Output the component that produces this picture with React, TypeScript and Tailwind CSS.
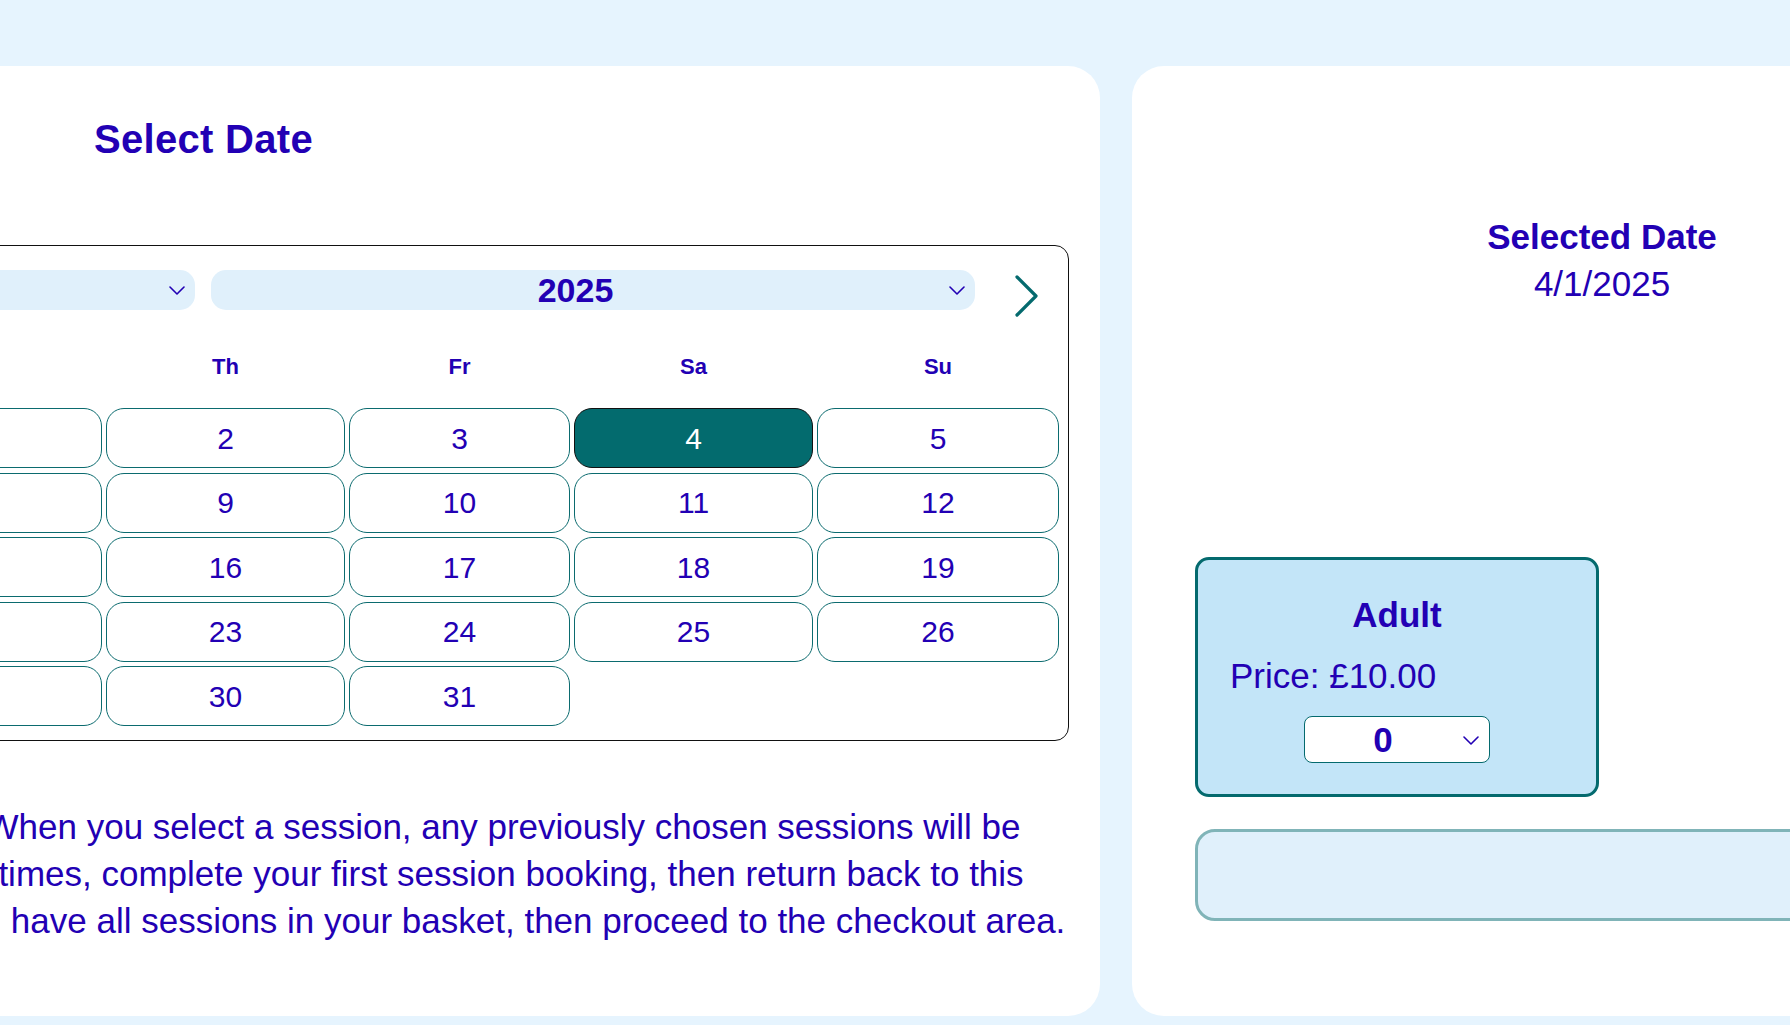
const days: (number | null)[] = [
  null, null, 1, 2, 3, 4, 5,
  6, 7, 8, 9, 10, 11, 12,
  13, 14, 15, 16, 17, 18, 19,
  20, 21, 22, 23, 24, 25, 26,
  27, 28, 29, 30, 31, null, null,
]

const weekdays = ['Mo', 'Tu', 'We', 'Th', 'Fr', 'Sa', 'Su']

function Chevron() {
  return (
    <svg width="16" height="9" viewBox="0 0 16 9" fill="none" className="text-[#2200b4]">
      <polyline points="1,1 8,8 15,1" stroke="currentColor" strokeWidth="1.6" strokeLinecap="round" strokeLinejoin="round" />
    </svg>
  )
}

function Arrow({ flip }: { flip?: boolean }) {
  return (
    <svg width="23" height="42" viewBox="0 0 23 42" fill="none" className={flip ? 'mt-[5px] -scale-x-100' : 'mt-[5px]'}>
      <polyline points="2,2 21,21 2,40" stroke="#046a6e" strokeWidth="3.2" strokeLinecap="round" strokeLinejoin="round" />
    </svg>
  )
}

function Dropdown({ label }: { label: string }) {
  return (
    <div className="relative flex-1 h-[40px] rounded-[15px] bg-[#e0f0fb] flex items-center pr-[35px]">
      <span className="flex-1 text-center text-[34px] font-bold leading-[40px]">{label}</span>
      <span className="absolute right-[10px] top-[16px] flex">
        <Chevron />
      </span>
    </div>
  )
}

function Calendar() {
  return (
    <div className="mt-[82px] border border-[#111] rounded-[14px] pt-[24px] pb-[14px]">
      <div className="flex items-start px-[30px]">
        <Arrow flip />
        <div className="flex flex-1 gap-[16px] mx-[40px]">
          <Dropdown label="January" />
          <Dropdown label="2025" />
        </div>
        <Arrow />
      </div>
      <div className="px-[9px]">
        <div className="grid grid-cols-[249px_249px_249px_239px_221px_239px_242px] gap-x-[4px] mt-[37px]">
          {weekdays.map((d) => (
            <div key={d} className="text-center text-[22px] font-bold leading-[26px]">{d}</div>
          ))}
        </div>
        <div className="grid grid-cols-[249px_249px_249px_239px_221px_239px_242px] gap-x-[4px] gap-y-[4.5px] mt-[28px]">
          {days.map((d, i) =>
            d === null ? (
              <div key={i} className="h-[60px]" />
            ) : (
              <div
                key={i}
                className={
                  d === 4
                    ? 'h-[60px] rounded-[18px] border border-[#111] bg-[#036b6e] text-white flex items-center justify-center text-[30px]'
                    : 'h-[60px] rounded-[18px] border border-[#0b6b6f] bg-white flex items-center justify-center text-[30px]'
                }
              >
                {d}
              </div>
            )
          )}
        </div>
      </div>
    </div>
  )
}

export default function App() {
  return (
    <div className="h-[1025px] w-[1790px] overflow-hidden bg-[#e6f4fe] text-[#2200b4] font-['Liberation_Sans',Arial,sans-serif]">
      <div className="flex gap-[32px] pt-[66px] -ml-[694px] w-max">
        {/* left: date picker */}
        <div className="w-[1794px] h-[950px] rounded-[32px] bg-white px-[31px]">
          <h1 className="mt-[49px] pl-[757px] text-[40px] font-bold leading-[48px] tracking-[0.3px]">Select Date</h1>
          <Calendar />
          <p className="mt-[62px] pl-[600px] text-center text-[35px] leading-[47px]">
            <span className="block">When you select a session, any previously chosen sessions will be</span>
            <span className="block pl-[16px]">times, complete your first session booking, then return back to this</span>
            <span className="block pl-[4px]">you have all sessions in your basket, then proceed to the checkout area.</span>
          </p>
        </div>

        {/* right: tickets */}
        <div className="w-[940px] h-[950px] rounded-[32px] bg-white px-[63px] pt-[147px]">
          <div className="text-center text-[35px] leading-[47px]">
            <div className="font-bold">Selected Date</div>
            <div>4/1/2025</div>
          </div>
          <div className="mt-[250px] w-[404px] rounded-[14px] border-[3px] border-[#046a6e] bg-[#c3e5f8] px-[32px] py-[31px]">
            <div className="text-center text-[35px] font-bold leading-[47px]">Adult</div>
            <div className="mt-[14px] text-[35px] leading-[47px]">Price: £10.00</div>
            <div className="relative mt-[17px] mx-auto w-[186px] h-[47px] rounded-[8px] border border-[#046a6e] bg-white flex items-center pr-[28px]">
              <span className="flex-1 text-center text-[35px] font-bold leading-[45px]">0</span>
              <span className="absolute right-[10px] top-[19px] flex">
                <Chevron />
              </span>
            </div>
          </div>
          <div className="mt-[32px] h-[92px] rounded-[20px] border-[3px] border-[#80b4b8] bg-[#e0f0fb]" />
        </div>
      </div>
    </div>
  )
}
